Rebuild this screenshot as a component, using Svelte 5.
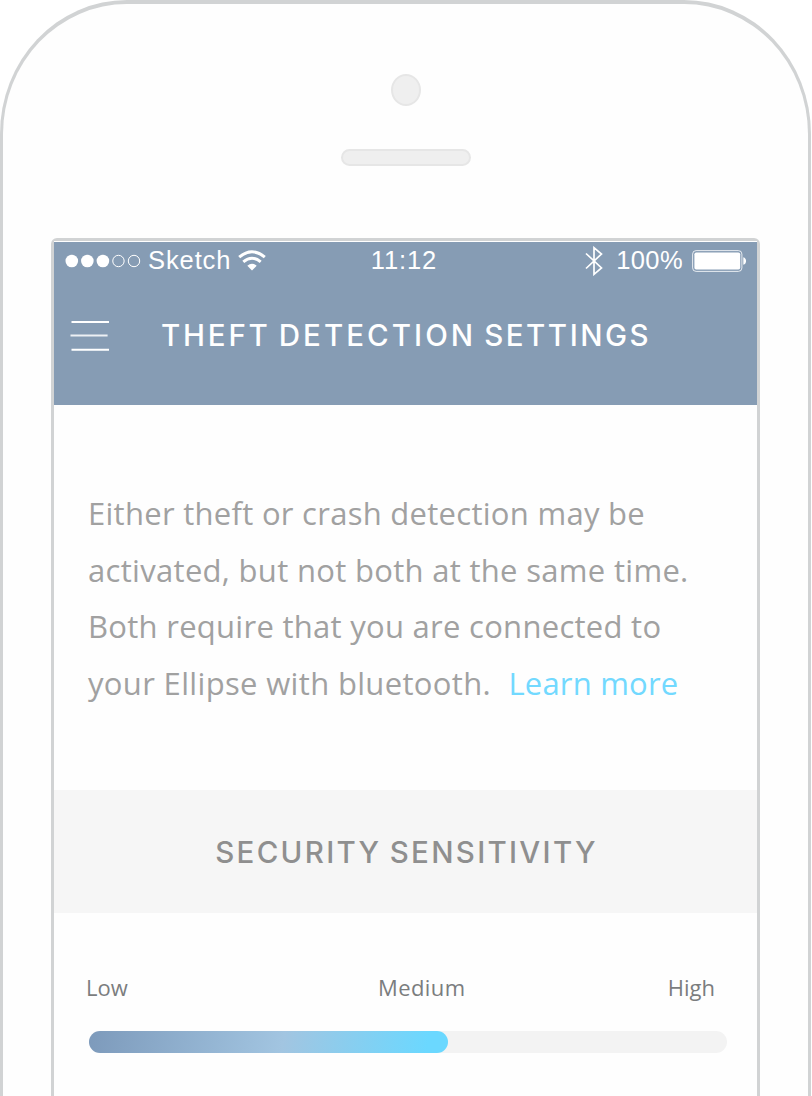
<script>
  const dots = [true, true, true, false, false];
  const lines = [
    { text: 'Either theft or crash detection may be', spacing: 0.28 },
    { text: 'activated, but not both at the same time.', spacing: 0.31 },
    { text: 'Both require that you are connected to', spacing: 0.28 },
  ];
  const level = 56.3;
</script>

<main class="phone">
  <div class="camera"></div>
  <div class="speaker"></div>

  <section class="screen">
    <header>
      <div class="status">
        <div class="carrier">
          <svg class="dots" width="76" height="14" viewBox="0 0 76 14">
            {#each dots as on, i}
              <circle cx={6.8 + i * 15.55} cy="7" r={on ? 6.3 : 5.7} fill={on ? '#fff' : 'none'} stroke={on ? 'none' : '#fff'} stroke-width="1" />
            {/each}
          </svg>
          <span class="name">Sketch</span>
          <svg class="wifi" width="28" height="21" viewBox="0 0 28 21">
            <g fill="none" stroke="#fff" stroke-width="3">
              <path d="M1.2 7.2Q14 -3.8 26.8 7.2" />
              <path d="M5.3 11.9Q14 4.5 22.7 11.9" />
            </g>
            <path d="M9.3 15.7Q14 11.6 18.7 15.7L14 20.6Z" fill="#fff" />
          </svg>
        </div>
        <span class="time">11:12</span>
        <div class="power">
          <svg width="18" height="30" viewBox="0 0 18 30">
            <path d="M1 7.5L16.5 22L9 28.3V1.7L16.5 8L1 22.5" fill="none" stroke="#fff" stroke-width="1.7" />
          </svg>
          <span class="percent">100%</span>
          <svg class="battery" width="55" height="22" viewBox="0 0 55 22">
            <rect x=".6" y=".6" width="49.3" height="20.8" rx="3.5" fill="none" stroke="#fff" stroke-opacity=".8" stroke-width="1" />
            <rect x="2.4" y="2.4" width="45.8" height="17.2" rx="1.8" fill="#fff" />
            <path d="M51.3 7.2C55 8 55 14 51.3 14.8Z" fill="#fff" />
          </svg>
        </div>
      </div>
      <div class="nav">
        <svg class="menu" width="40" height="32" viewBox="0 0 40 32">
          <g stroke="#fff" stroke-width="2">
            <path d="M1.5 2H39M1.5 29.8H39" />
            <path d="M.5 15.4H37.6" stroke-opacity=".85" />
          </g>
        </svg>
        <h1><span class="w1">THEFT</span> <span class="w2">DETECTION</span> <span class="w3">SETTINGS</span></h1>
      </div>
    </header>

    <div class="intro">
      {#each lines as line}<div style="letter-spacing: {line.spacing}px">{line.text}</div>{/each}<div class="last">your Ellipse with bluetooth. <span class="link">Learn more</span></div></div>

    <h2>SECURITY SENSITIVITY</h2>

    <div class="slider">
      <div class="labels"><span>Low</span><span class="mid">Medium</span><span>High</span></div>
      <div class="track"><div class="fill" style="width: {level}%"></div></div>
    </div>
  </section>
</main>

<style>
  :global(body) { background: #fff; overflow: hidden; }
  .phone {
    box-sizing: border-box;
    width: 811px;
    height: 1096px;
    overflow: hidden;
    border: 3.5px solid #d1d3d4;
    border-width: 4px 3px 0 3px;
    border-radius: 127px 127px 0 0 / 134px 134px 0 0;
    display: flex;
    flex-direction: column;
    align-items: center;
    background: #fefefe;
  }
  .camera, .speaker {
    box-sizing: border-box;
    flex: none;
    background: #efefef;
    border: 2px solid #e6e6e6;
  }
  .camera { width: 30px; height: 32px; border-radius: 50%; margin-top: 70px; margin-left: 1px; }
  .speaker { width: 130px; height: 17px; border-radius: 9px; margin-top: 43px; }
  .screen {
    box-sizing: border-box;
    flex: none;
    width: 709px;
    height: 900px;
    margin-top: 72px;
    border: 3px solid #d1d3d4;
    border-radius: 6px 6px 0 0;
    background: #fefefe;
    font-family: "Open Sans", "Noto Sans", sans-serif;
  }
  header {
    box-sizing: border-box;
    height: 164px;
    background: #869cb4;
    color: #fff;
    border-top: 1px solid #fff;
  }
  .status {
    display: grid;
    grid-template-columns: 1fr auto 1fr;
    height: 37px;
    align-items: center;
    padding: 0 10px 0 11px;
    font: 25.5px/30px "Liberation Sans", sans-serif;
  }
  .carrier, .power { display: flex; align-items: center; }
  .power { justify-content: flex-end; }
  .name, .time, .percent { margin-top: -2px; }
  .name { margin-left: 7px; letter-spacing: 0.9px; }
  .time { letter-spacing: 0.9px; margin-right: 4px; }
  .wifi { margin-left: 7px; }
  .percent { margin-left: 13px; letter-spacing: 0.4px; }
  .battery { margin-left: 9px; }
  .nav { display: flex; align-items: center; padding: 39px 0 0 16px; }
  h1, h2 { margin: 0; font-family: Inter, sans-serif; font-weight: 500; white-space: nowrap; }
  h1 { margin-left: 51px; margin-top: -1px; font-size: 29.5px; line-height: 36px; letter-spacing: 1.8px; word-spacing: -1.6px; }
  .w1 { letter-spacing: 2.8px; }
  .w2 { letter-spacing: 3.05px; }
  .w3 { letter-spacing: 2.5px; }
  .intro {
    height: 305px;
    padding: 80px 0 0 34px;
    font-size: 31px;
    line-height: 56.5px;
    color: #a1a1a1;
    white-space: nowrap;
  }
  .last { letter-spacing: 0.34px; }
  .link { color: #72d9ff; margin-left: 9px; letter-spacing: 0.2px; }
  h2 {
    height: 123px;
    line-height: 124px;
    background: #f6f6f6;
    color: #8f8f8f;
    font-size: 29.5px;
    text-align: center;
    letter-spacing: 2.3px;
    word-spacing: -1.8px;
    text-indent: 2px;
  }
  .slider { padding: 59px 30px 0 35px; }
  .labels {
    display: flex;
    justify-content: space-between;
    margin: 0 12px 0 -3px;
    font-size: 22px;
    line-height: 30px;
    color: #7b7d7e;
  }
  .mid { letter-spacing: 0.4px; margin: 0 -24px 0 24px; }
  .track { margin-top: 29px; height: 22px; border-radius: 11px; background: #f3f3f3; }
  .fill {
    height: 22px;
    border-radius: 11px;
    background: linear-gradient(100deg, #7d9abb 0%, #a2c5e1 54%, #6bd8ff 94%);
  }
</style>
